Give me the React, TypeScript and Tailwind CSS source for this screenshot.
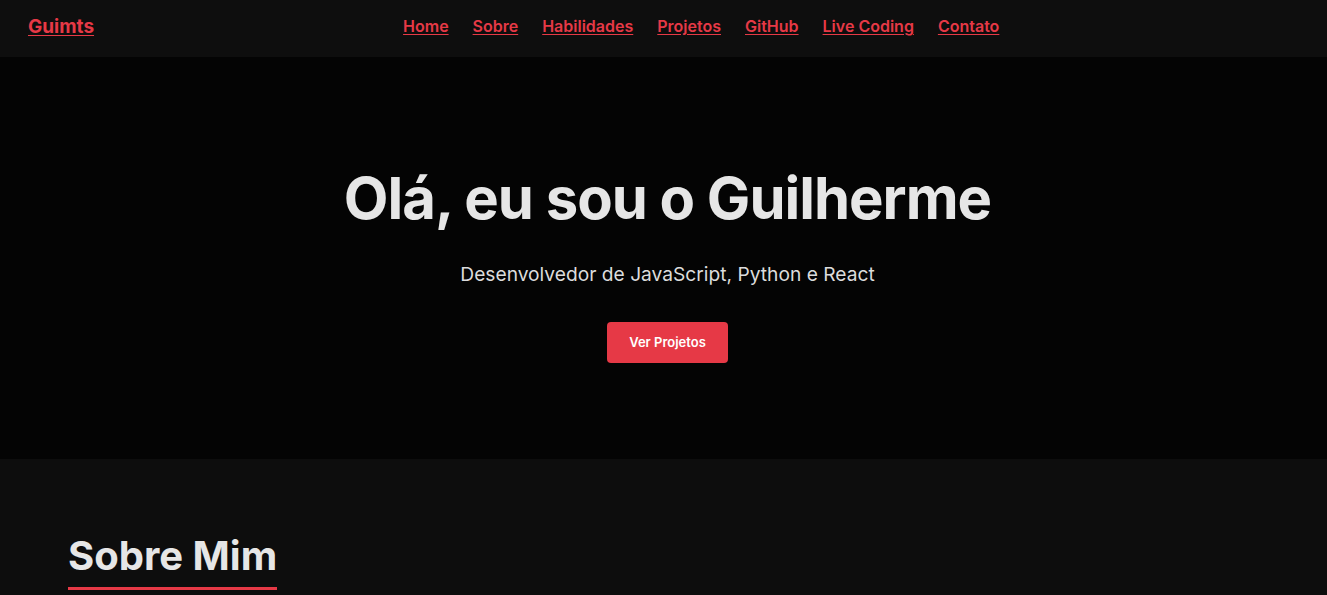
export default function App() {
  return (
    <div className="min-h-screen bg-[#0d0d0d] text-[#e6e6e6]" style={{ fontFamily: "Inter, 'Noto Sans', sans-serif" }}>
      {/* top nav */}
      <header className="h-[57px] bg-[#0e0e0e] flex items-center px-[28px] pb-[5px]">
        <a href="#" className="text-[19px] font-bold leading-none text-[#e63946] underline underline-offset-2">
          Guimts
        </a>
        <nav className="ml-[309px] flex gap-[24px] text-[16px] font-semibold leading-none text-[#e63946]">
          <a href="#" className="underline underline-offset-2">Home</a>
          <a href="#" className="underline underline-offset-2">Sobre</a>
          <a href="#" className="underline underline-offset-2">Habilidades</a>
          <a href="#" className="underline underline-offset-2">Projetos</a>
          <a href="#" className="underline underline-offset-2">GitHub</a>
          <a href="#" className="underline underline-offset-2">Live Coding</a>
          <a href="#" className="underline underline-offset-2">Contato</a>
        </nav>
      </header>

      {/* hero */}
      <section className="h-[402px] bg-[#040404] flex flex-col items-center pt-[112px] pl-[8px]">
        <h1 className="text-[58px] font-bold leading-none text-[#e6e6e6] tracking-[-1px]">Olá, eu sou o Guilherme</h1>
        <p className="mt-[33px] text-[19.2px] text-[#dcdcdc]">Desenvolvedor de JavaScript, Python e React</p>
        <button className="mt-[33px] w-[121px] h-[41px] rounded-[4px] bg-[#e63946] text-white text-[13px] font-semibold">
          Ver Projetos
        </button>
      </section>

      {/* sobre */}
      <section className="px-[68px] pt-[72px] pb-10">
        <h2 className="inline-block text-[40px] font-bold leading-tight text-[#e6e6e6] border-b-[3px] border-[#e63946] pb-[6px]">
          Sobre Mim
        </h2>
      </section>
    </div>
  );
}
